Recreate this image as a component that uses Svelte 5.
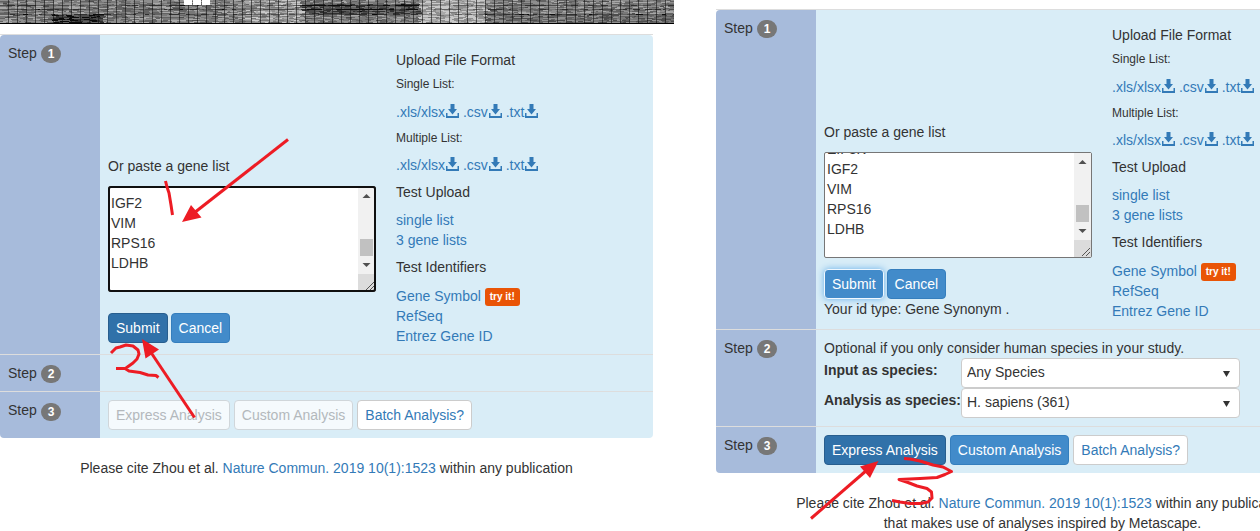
<script>
  const genes = [
    'TPT1', 'RPL7', 'ACTB', 'GAPD', 'RPS6', 'FTH1', 'ENO1', 'RPL3', 'TUBB', 'HSPB1',
    'EIF3K', 'IGF2', 'VIM', 'RPS16', 'LDHB', ''
  ];
  const geneText = genes.join('\n');

  const panels = [
    { id: 'a', heatmap: true, focused: true, ready: false },
    { id: 'b', heatmap: false, focused: false, ready: true }
  ];

  const formats = ['.xls/xlsx', '.csv', '.txt'];

  function scrollToTail(node) {
    node.scrollTop = 216;
  }

  // Heatmap texture: short horizontal streaks collected into one path per grey level.
  const levels = ['#0b0b0b', '#303030', '#4c4c4c', '#626262', '#787878', '#8e8e8e', '#a8a8a8', '#c8c8c8'];
  const streaks = levels.map(() => '');
  let seed = 77;
  const rand = () => {
    seed = (seed * 1103515245 + 12345) % 2147483648;
    return seed / 2147483648;
  };
  function tone(x, y) {
    let t = 4.2;
    if (x > 417 && x < 484) t += 2;
    if (x > 242 && x < 300) t += 1;
    if (x >= 300 && x < 417 && y > 3 && y < 14) t -= 2;
    if (x > 50 && x < 103 && y > 14) t -= 3;
    if (x > 484 && y > 13) t -= 0.8;
    if (y === 5 || y === 9 || y === 14) t -= 2;
    return t;
  }
  for (let y = 0; y < 23; y++) {
    let x = 0;
    while (x < 674) {
      const w = Math.min(2 + Math.floor(rand() * 6), 674 - x);
      const l = Math.max(0, Math.min(7, Math.round(tone(x, y) + (rand() - 0.5) * 3.6)));
      streaks[l] += `M${x} ${y}h${w}v1h-${w}z`;
      x += w;
    }
  }
  let columns = '';
  for (let x = 8; x < 674; x += 9) columns += `M${x}.5 0v23`;
</script>

{#snippet download()}
  <svg class="dl" viewBox="0 0 13 14" aria-hidden="true">
    <path d="M4.500 0h4v5H11L6.500 10.500 2 5h2.500z M0 9h1.500v3h10V9H13v5H0z" fill="currentColor" />
  </svg>
{/snippet}

{#snippet step(n)}
  <div class="step">Step <span class="badge">{n}</span></div>
{/snippet}

{#snippet citation()}
  Please cite Zhou et al. <a href="#cite">Nature Commun. 2019 10(1):1523</a> within any publication
{/snippet}

<main class="page">
  {#each panels as p}
    <section class="column" class:offset={!p.heatmap}>
      {#if p.heatmap}
        <svg class="heatmap" viewBox="0 0 674 24" shape-rendering="crispEdges" aria-hidden="true">
          {#each streaks as d, i}
            <path {d} fill={levels[i]} />
          {/each}
          <path d={columns} stroke="#111" stroke-opacity=".6" />
          <path d="M184 0h8v5h-8z M193 0h8v5h-8z M202 0h8v5h-8z" fill="#fff" />
          <path d="M0 23h674v1H0z" />
        </svg>
      {/if}

      <div class="wizard">
        <div class="row">
          {@render step(1)}
          <div class="body split">
            <div class="paste" class:late={p.heatmap}>
              <label for="genes-{p.id}">Or paste a gene list</label>
              <div class="area" class:focused={p.focused}>
                <textarea id="genes-{p.id}" value={geneText} use:scrollToTail></textarea>
                <svg class="bar" viewBox="0 0 17 104" aria-hidden="true">
                  <path d="M0 0h17v87H0z" fill="#f1f1f1" />
                  <path d="M0 87h17v17H0z" fill="#dcdcdc" />
                  <path d="M2 52h13v17H2z" fill="#c1c1c1" />
                  <path d="M4.500 11l4-4 4 4z M4.500 76l4 4 4-4z" fill="#505050" />
                  <path d="M8 103l8-8 M12 103l4-4" stroke="#555" fill="none" />
                </svg>
              </div>
              <div class="buttons">
                <button class="primary" class:active={p.focused} class:glow={!p.focused}>Submit</button>
                <button class="primary">Cancel</button>
              </div>
              {#if p.ready}
                <div>Your id type: Gene Synonym .</div>
              {/if}
            </div>

            <div class="help">
              <h2>Upload File Format</h2>
              <p class="small">Single List:</p>
              <div class="files">
                {#each formats as f}<a href="#single">{f}{@render download()}</a>{' '}{/each}
              </div>
              <p class="small">Multiple List:</p>
              <div class="files">
                {#each formats as f}<a href="#multiple">{f}{@render download()}</a>{' '}{/each}
              </div>
              <h2>Test Upload</h2>
              <ul>
                <li><a href="#one">single list</a></li>
                <li><a href="#three">3 gene lists</a></li>
              </ul>
              <h2>Test Identifiers</h2>
              <ul>
                <li><a href="#symbol">Gene Symbol</a> <span class="tag">try it!</span></li>
                <li><a href="#refseq">RefSeq</a></li>
                <li><a href="#entrez">Entrez Gene ID</a></li>
              </ul>
            </div>
          </div>
        </div>

        <div class="row">
          {@render step(2)}
          <div class="body">
            {#if p.ready}
              <div>Optional if you only consider human species in your study.</div>
              <div class="species">
                <label for="input-species">Input as species:</label>
                <div class="pick">
                  <select id="input-species"><option>Any Species</option></select>
                  <svg viewBox="0 0 7 6" aria-hidden="true"><path d="M0 0h7L3.500 6z" fill="#333" /></svg>
                </div>
                <label for="analysis-species">Analysis as species:</label>
                <div class="pick">
                  <select id="analysis-species"><option>H. sapiens (361)</option></select>
                  <svg viewBox="0 0 7 6" aria-hidden="true"><path d="M0 0h7L3.500 6z" fill="#333" /></svg>
                </div>
              </div>
            {/if}
          </div>
        </div>

        <div class="row">
          {@render step(3)}
          <div class="body buttons">
            <button class:primary={p.ready} class:active={p.ready} disabled={!p.ready}>Express Analysis</button>
            <button class:primary={p.ready} disabled={!p.ready}>Custom Analysis</button>
            <button>Batch Analysis?</button>
          </div>
        </div>
      </div>

      <footer>
        {@render citation()}
        {#if p.ready}<br />that makes use of analyses inspired by Metascape.{/if}
      </footer>
    </section>
  {/each}

  <svg class="marks" aria-hidden="true">
    <g fill="none" stroke="#ed1c24" stroke-width="3" stroke-linejoin="round">
      <path d="M288 139.500L194 213" />
      <path d="M165.500 181L167 187 169 193 171 205 172.500 215" />
      <path d="M194.500 417.500L150 351" />
      <path d="M111 353L116 348 120 347 126 345 133 346 138 350 139 354 137 359 133 363 126 368 M116 368.500L125 368.500 129 371 140 372.500 148 375 156 375.500 158.500 377.500" />
      <path d="M811 518.500L867 470" />
      <path d="M904 458.500L910 459 920 461 933 465 943 467 951.500 471.500 945 474.500 937 477.500 920 478.500 899 479.500 908 482.500 917 486 927 488.500 931.500 492 932 498 928 502 920 503.500 910 503.500 900 502 892 500.500" />
    </g>
    <path fill="#ed1c24" d="M182 222L191 205 201.500 217.500z M142 339L159 349.500 145.500 358.500z M878.500 461L860 466.500 870 478z" />
  </svg>
</main>

<style>
  :global(body) {
    background: #fff;
  }
  .page {
    position: relative;
    display: flex;
    gap: 63px;
    height: 100vh;
    overflow: hidden;
    font: 14px/20px "Liberation Sans", Arial, sans-serif;
    color: #333;
  }
  .page :global(*) {
    box-sizing: border-box;
  }
  .column {
    flex: none;
    width: calc(50vw + 23px);
  }
  .offset {
    padding-top: 9px;
  }
  .heatmap {
    display: block;
    width: 674px;
    height: 24px;
    margin-bottom: 10px;
  }
  .row {
    display: grid;
    grid-template-columns: 100px 1fr;
    border-top: 1px solid #ddd;
  }
  .step {
    padding: 8px;
    background: #a7bbdb;
  }
  .body {
    padding: 8px;
    background: #d9edf7;
  }
  .row:first-child .step {
    border-top-left-radius: 4px;
  }
  .row:first-child .body {
    border-top-right-radius: 4px;
  }
  .row:last-child .step {
    border-bottom-left-radius: 4px;
  }
  .row:last-child .body {
    border-bottom-right-radius: 4px;
  }
  .badge {
    display: inline-block;
    padding: 3px 7px;
    border-radius: 10px;
    background: #777;
    color: #fff;
    font-size: 12px;
    font-weight: bold;
    line-height: 12px;
    vertical-align: middle;
  }
  .split {
    display: grid;
    grid-template-columns: 288px 1fr;
  }
  .paste {
    padding-top: 104px;
  }
  .paste.late {
    padding-top: 113px;
  }
  .paste label {
    display: block;
    margin-bottom: 10px;
  }
  .area {
    position: relative;
    width: 268px;
    margin-bottom: 11px;
  }
  .late .area {
    margin-bottom: 21px;
  }
  textarea {
    display: block;
    width: 100%;
    height: 106px;
    margin: 0;
    padding: 2px 19px 2px 2px;
    border: 1px solid #767676;
    border-radius: 2px;
    background: #fff;
    color: #333;
    font: inherit;
    overflow: hidden;
    resize: none;
  }
  .bar {
    position: absolute;
    top: 1px;
    right: 1px;
    width: 17px;
    height: 104px;
  }
  .focused::after {
    content: "";
    position: absolute;
    inset: 0;
    border: 2px solid #101010;
    border-radius: 3px;
    pointer-events: none;
  }
  .buttons {
    display: flex;
    gap: 4px;
  }
  .paste .buttons {
    gap: 3px;
  }
  button {
    height: 30px;
    margin: 0;
    padding: 0 7px;
    border: 1px solid #ccc;
    border-radius: 4px;
    background: #fff;
    color: #337ab7;
    font: inherit;
    white-space: nowrap;
  }
  button.primary {
    border-color: #357ebd;
    background: #428bca;
    color: #fff;
  }
  button.active {
    border-color: #285e8e;
    background: #3071a9;
  }
  button.glow {
    border-color: #f0f8ff;
    box-shadow: 0 0 7px #66afe9;
  }
  button:disabled {
    border-color: #d0d6da;
    background: #f5fafd;
    color: #b3b8bc;
  }
  a {
    color: #337ab7;
    text-decoration: none;
  }
  h2,
  p,
  ul {
    margin: 0;
    padding: 0;
    font-size: 14px;
    font-weight: normal;
    list-style: none;
  }
  h2 {
    margin-top: 7px;
  }
  ul {
    margin-top: 8px;
  }
  ul:last-child {
    margin-top: 9px;
  }
  .small {
    margin-top: 4px;
    font-size: 12px;
  }
  .files {
    margin-top: 8px;
    white-space: nowrap;
  }
  .files + .small {
    margin-top: 6px;
  }
  .small ~ .small + .files {
    margin-top: 7px;
  }
  .dl {
    width: 13px;
    height: 14px;
    margin-left: 1px;
    vertical-align: -1px;
  }
  .tag {
    display: inline-block;
    padding: 0 5px;
    border-radius: 3px;
    background: #e95406;
    color: #fff;
    font-size: 10px;
    font-weight: bold;
    line-height: 18px;
    vertical-align: top;
    margin-top: 2px;
    height: 18px;
  }
  .species {
    display: grid;
    grid-template-columns: 137px 279px;
  }
  .species label {
    font-weight: bold;
    line-height: 24px;
    white-space: nowrap;
  }
  .pick {
    position: relative;
  }
  .pick svg {
    position: absolute;
    right: 10px;
    top: 13px;
    width: 7px;
    height: 6px;
    pointer-events: none;
  }
  select {
    display: block;
    width: 100%;
    height: 30px;
    padding: 0 5px 2px;
    border: 1px solid #ccc;
    border-radius: 4px;
    background: #fff;
    color: #333;
    font: inherit;
    appearance: none;
  }
  footer {
    margin-top: 20px;
    text-align: center;
  }
  .marks {
    position: absolute;
    inset: 0;
    width: 100%;
    height: 100%;
    pointer-events: none;
  }
</style>
